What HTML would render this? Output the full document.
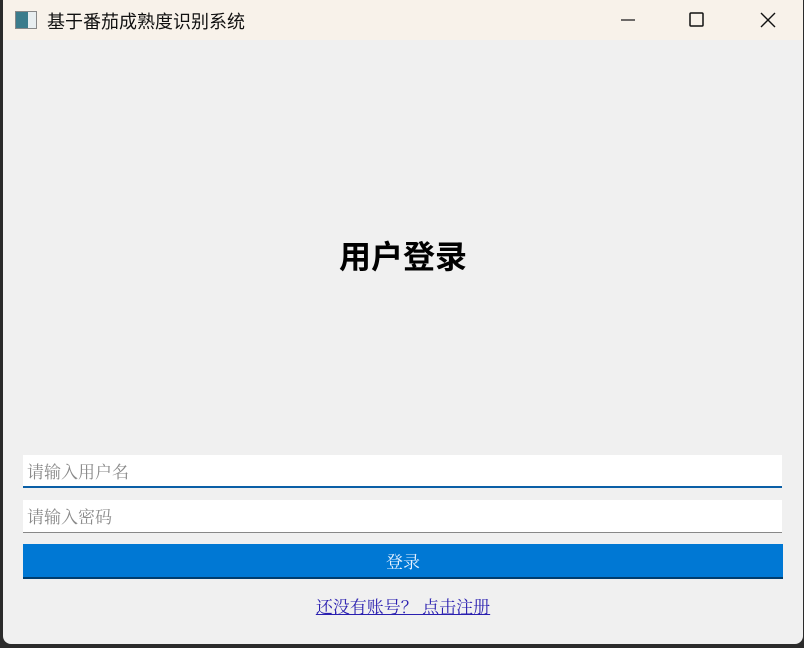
<!DOCTYPE html>
<html><head><meta charset="utf-8"><style>
body{margin:0;width:804px;height:648px;background:#2b2b2b;position:relative;overflow:hidden;font-family:"Liberation Sans","Noto Sans CJK SC",sans-serif}
.win{position:absolute;left:3px;top:0;width:800px;height:644px;background:#f0f0f0;border-radius:0 0 8px 8px;overflow:hidden}
.tb{position:absolute;left:0;top:0;width:800px;height:40px;background:#f8f2ea}
.title{position:absolute;left:44px;top:8px;font-size:18px;color:#111}
.icon{position:absolute;left:12px;top:11px;width:20px;height:16px;border:1px solid #888;background:linear-gradient(90deg,#3b7c8c 0 60%,#e8eef0 60%)}
.h{position:absolute;left:0;width:800px;top:232px;text-align:center;font-size:32px;font-weight:bold;font-family:"Noto Sans CJK SC",sans-serif;color:#000}
.in{position:absolute;left:20px;width:759px;height:33px;background:#fff;font-family:"Noto Serif CJK SC",serif;font-size:17px;color:#8a8a8a;line-height:32px;padding-left:4px;box-sizing:border-box}
.btn{position:absolute;left:20px;top:544px;width:760px;height:35px;background:#0078d4;border-bottom:2px solid #003d6e;box-sizing:border-box;color:#e8f2ff;text-align:center;line-height:34px;font-family:"Noto Serif CJK SC",serif;font-size:17px}
.lnk{position:absolute;left:0;width:800px;top:593px;text-align:center;font-family:"Noto Serif CJK SC",serif;font-size:17px;color:#2a1fb0;text-decoration:underline}
</style></head><body>
<div class="win">
<div class="tb"><div class="icon"></div><div class="title">基于番茄成熟度识别系统</div>
<svg style="position:absolute;left:610px;top:10px" width="170" height="20"><line x1="8" y1="10" x2="22" y2="10" stroke="#111" stroke-width="1.2"/><rect x="77" y="3" width="13" height="13" fill="none" stroke="#111" stroke-width="1.5" rx="1"/><path d="M148 3L162 17M162 3L148 17" stroke="#111" stroke-width="1.4"/></svg></div>
<div class="h">用户登录</div>
<div class="in" style="top:455px;border-bottom:2px solid #0a5fa6">请输入用户名</div>
<div class="in" style="top:500px;border-bottom:1px solid #888">请输入密码</div>
<div class="btn">登录</div>
<div class="lnk">还没有账号？&nbsp;点击注册</div>
</div>
</body></html>
